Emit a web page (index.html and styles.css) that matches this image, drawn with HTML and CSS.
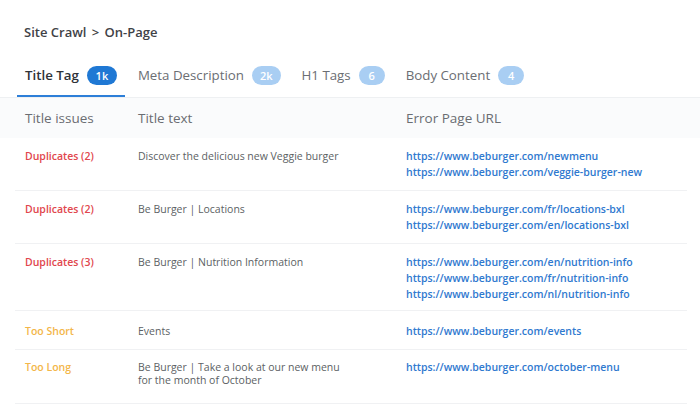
FILE: index.html
```html
<!DOCTYPE html>
<html lang="en">
<head>
<meta charset="utf-8">
<title>Site Crawl - On-Page</title>
<link rel="stylesheet" href="styles.css">
</head>
<body>
<div class="page">
  <div class="crumb">Site Crawl <span class="sep">&gt;</span> On-Page</div>
  <nav class="tabs">
    <div class="tab active">Title Tag <span class="badge">1k</span></div>
    <div class="tab">Meta Description <span class="badge">2k</span></div>
    <div class="tab">H1 Tags <span class="badge">6</span></div>
    <div class="tab">Body Content <span class="badge">4</span></div>
  </nav>
  <div class="table">
    <div class="row head">
      <div class="c1">Title issues</div>
      <div class="c2">Title text</div>
      <div class="c3">Error Page URL</div>
    </div>
    <div class="row">
      <div class="c1 issue dup">Duplicates (2)</div>
      <div class="c2 ttl">Discover the delicious new Veggie burger</div>
      <div class="c3 urls"><span>https://www.beburger.com/newmenu</span><span>https://www.beburger.com/veggie-burger-new</span></div>
    </div>
    <div class="row">
      <div class="c1 issue dup">Duplicates (2)</div>
      <div class="c2 ttl">Be Burger | Locations</div>
      <div class="c3 urls"><span>https://www.beburger.com/fr/locations-bxl</span><span>https://www.beburger.com/en/locations-bxl</span></div>
    </div>
    <div class="row triple">
      <div class="c1 issue dup">Duplicates (3)</div>
      <div class="c2 ttl">Be Burger | Nutrition Information</div>
      <div class="c3 urls"><span>https://www.beburger.com/en/nutrition-info</span><span>https://www.beburger.com/fr/nutrition-info</span><span>https://www.beburger.com/nl/nutrition-info</span></div>
    </div>
    <div class="row single">
      <div class="c1 issue warn">Too Short</div>
      <div class="c2 ttl">Events</div>
      <div class="c3 urls"><span>https://www.beburger.com/events</span></div>
    </div>
    <div class="row last">
      <div class="c1 issue warn">Too Long</div>
      <div class="c2 ttl wrap">Be Burger | Take a look at our new menu for the month of October</div>
      <div class="c3 urls"><span>https://www.beburger.com/october-menu</span></div>
    </div>
  </div>
</div>
</body>
</html>
```

FILE: styles.css
```css
* { box-sizing: border-box; }
html, body { margin: 0; padding: 0; background: #ffffff; }
body {
  font-family: "Open Sans", "Noto Sans", sans-serif;
  color: #555;
  width: 700px;
  height: 412px;
  overflow: hidden;
}
.page { padding-top: 22px; }
.crumb {
  padding-left: 24px;
  font-size: 13px;
  font-weight: 600;
  color: #3f4247;
  line-height: 20px;
}
.crumb .sep { margin: 0 2px; }
.tabs {
  display: flex;
  padding-left: 17px;
  margin-top: 11px;
  height: 44px;
}
.tab {
  display: flex;
  align-items: center;
  gap: 8px;
  padding: 2px 8px 0;
  margin-right: 5px;
  font-size: 13.3px;
  color: #6b6e73;
  border-bottom: 2px solid transparent;
  height: 44px;
}
.tab.active {
  color: #2f3237;
  font-weight: 600;
  border-bottom-color: #2d7fd8;
}
.badge {
  display: inline-flex;
  align-items: center;
  justify-content: center;
  min-width: 26px;
  height: 19px;
  padding: 0 8px;
  border-radius: 10px;
  background: #a9cef3;
  color: #ffffff;
  font-size: 11px;
  font-weight: 600;
}
.tab.active .badge { background: #1f78d4; min-width: 30px; }
.table { border-top: 1px solid #eef0f2; }
.row {
  display: grid;
  grid-template-columns: 113px 268px 1fr;
  padding: 10px 0 10px 10px;
  margin: 0 13px 0 15px;
  border-bottom: 1px solid #f0f1f3;
  font-size: 10.5px;
  line-height: 16px;
}
.row.head {
  margin: 0;
  padding: 10px 0 10px 25px;
  background: #fafbfc;
  border-bottom: none;
  font-size: 13.5px;
  line-height: 20px;
  color: #6a6d72;
  height: 40px;
}
.row.triple { padding-bottom: 8px; }
.row.single { padding: 12px 0 10px 10px; }
.row.last { padding: 9px 0 16px 10px; }
.issue { font-weight: 600; }
.dup { color: #e1464d; }
.warn { color: #f3b64a; }
.ttl { color: #5c5f64; }
.wrap { max-width: 215px; line-height: 13px; padding-top: 1.5px; }
.urls { display: flex; flex-direction: column; }
.urls span { color: #2f79cf; font-weight: 600; }
```
